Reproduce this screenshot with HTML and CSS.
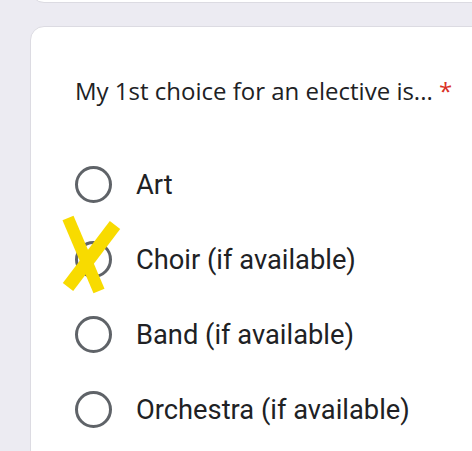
FILE: index.html
```html
<!DOCTYPE html>
<html>
<head>
<meta charset="utf-8">
<link rel="stylesheet" href="styles.css">
</head>
<body>
<div class="page">
  <div class="prev-card"></div>
  <div class="card">
    <div class="question">My 1st choice for an elective is... <span class="req">*</span></div>
    <div class="options">
      <div class="option"><span class="radio"></span><span class="label">Art</span></div>
      <div class="option marked">
        <span class="radio"></span><span class="label">Choir (if available)</span>
        <svg class="scribble" width="70" height="90" viewBox="0 0 70 90">
          <path d="M 13 5 L 44 78" stroke="#f8db00" stroke-width="12" fill="none"/>
          <path d="M 60 12 L 13 74" stroke="#f8db00" stroke-width="13" fill="none"/>
        </svg>
      </div>
      <div class="option"><span class="radio"></span><span class="label">Band (if available)</span></div>
      <div class="option"><span class="radio"></span><span class="label">Orchestra (if available)</span></div>
    </div>
  </div>
</div>
</body>
</html>
```
FILE: styles.css
```css
html, body {
  margin: 0;
  padding: 0;
  background: #ecebf2;
  overflow: hidden;
}
.page {
  width: 472px;
  height: 451px;
  overflow: hidden;
}
.prev-card {
  margin-left: 30px;
  width: 460px;
  height: 40px;
  margin-top: -37px;
  background: #fff;
  border: 1px solid #dcdbe2;
  border-radius: 14px;
  box-sizing: border-box;
}
.card {
  margin-top: 23px;
  margin-left: 30px;
  width: 460px;
  height: 460px;
  background: #fff;
  border: 1px solid #dcdbe2;
  border-radius: 14px;
  box-sizing: border-box;
  padding: 48px 0 0 44px;
}
.question {
  font-family: "Comic Sans MS", "Open Sans", sans-serif;
  font-size: 24px;
  line-height: 32px;
  color: #202124;
}
.req {
  color: #d93025;
}
.options {
  margin-top: 59px;
  display: flex;
  flex-direction: column;
  gap: 38px;
}
.option {
  position: relative;
  display: flex;
  align-items: center;
  height: 37px;
}
.radio {
  width: 37px;
  height: 37px;
  border: 3.5px solid #5f6368;
  border-radius: 50%;
  box-sizing: border-box;
  flex: none;
}
.label {
  margin-left: 24px;
  font-family: Roboto, sans-serif;
  font-size: 27.3px;
  color: #202124;
}
.scribble {
  position: absolute;
  left: -20px;
  top: -28px;
}
```
